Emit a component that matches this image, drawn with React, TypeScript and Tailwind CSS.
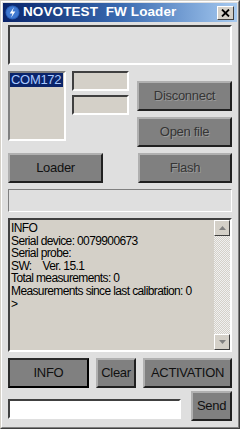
import React from "react";

const font = { fontFamily: '"Liberation Sans", Arial, sans-serif' };

function Btn({ label, className = "", dim = false, def = false }: { label: string; className?: string; dim?: boolean; def?: boolean }) {
  return (
    <div
      className={
        "flex items-center justify-center bg-[#808080] text-[13px] tracking-[-0.3px] " +
        (def
          ? "border-2 border-t-[#2a2a2a] border-l-[#2a2a2a] border-b-black border-r-black "
          : "border-2 border-t-[#b0b0b0] border-l-[#b0b0b0] border-b-[#202020] border-r-[#202020] ") +
        (dim ? "text-[#353535] " : "text-[#101010] ") +
        className
      }
    >
      <span style={dim ? { textShadow: "1px 1px 0 #9a9a9a" } : undefined}>{label}</span>
    </div>
  );
}

function Sunken({ className = "", children }: { className?: string; children?: React.ReactNode }) {
  return (
    <div className={"border-2 border-t-[#404040] border-l-[#404040] border-b-white border-r-white " + className}>
      {children}
    </div>
  );
}

export default function App() {
  return (
    <div style={font} className="w-[240px] h-[429px] bg-[#5a4a30] overflow-hidden">
      <div className="w-[240px] h-[429px] border border-t-[#d4d0c8] border-l-[#d4d0c8] border-b-[#404040] border-r-[#404040] bg-[#d4d0c8]">
        <div className="h-full border border-t-white border-l-white border-b-[#808080] border-r-[#808080] p-[1px] flex flex-col bg-[#dfdfdf]">
          {/* title bar */}
          <div className="h-[19px] shrink-0 flex items-center bg-gradient-to-r from-[#0a246a] via-[#3a6ab0] to-[#a6caf0] pl-[2px] pr-[3px]">
            <svg width="15" height="15" viewBox="0 0 16 16" className="shrink-0">
              <circle cx="8" cy="8" r="7.5" fill="#2a5fb8" />
              <circle cx="8" cy="8" r="6.5" fill="#3f78d0" />
              <path d="M9.5 2.5 L5 9 L8 9 L6.5 13.5 L11 7 L8 7 Z" fill="white" />
            </svg>
            <span className="ml-[3px] text-white font-bold text-[13.5px] tracking-[0.1px] whitespace-pre">NOVOTEST  FW Loader</span>
            <div className="ml-auto w-[17px] h-[14px] bg-[#d4d0c8] border border-t-white border-l-white border-b-[#404040] border-r-[#404040] flex items-center justify-center">
              <svg width="9" height="8" viewBox="0 0 9 8">
                <path d="M1 0.5 L8 7.5 M8 0.5 L1 7.5" stroke="black" strokeWidth="1.8" />
              </svg>
            </div>
          </div>
          {/* body */}
          <div className="flex-1 flex flex-col px-[5px] pt-[3px] bg-[#dfdfdf]">
            <Sunken className="h-[40px] bg-[#dfdfdf] w-[224px]" />
            <div className="flex mt-[6px]">
              <Sunken className="w-[59px] h-[70px] bg-[#d4d0c8] border-t-[#808080] border-l-[#808080] border-r-white border-b-white">
                <div className="bg-[#0a246a] text-[#a8c8ff] text-[13px] leading-[14px] h-[14px] pl-[1px] mr-[1px] tracking-[-0.3px]">COM172</div>
              </Sunken>
              <div className="flex flex-col ml-[6px] gap-[4px]">
                <Sunken className="w-[57px] h-[20px] bg-[#d4d0c8]" />
                <Sunken className="w-[57px] h-[20px] bg-[#d4d0c8]" />
              </div>
              <div className="flex flex-col ml-[8px] mt-[10px] gap-[6px]">
                <Btn label="Disconnect" dim className="w-[95px] h-[30px]" />
                <Btn label="Open file" dim className="w-[95px] h-[30px]" />
              </div>
            </div>
            <div className="flex mt-[6px] justify-between w-[224px]">
              <Btn label="Loader" className="w-[95px] h-[30px]" />
              <Btn label="Flash" dim className="w-[94px] h-[30px]" />
            </div>
            <Sunken className="mt-[6px] h-[23px] w-[224px] bg-[#dfdfdf] border-t-[#808080] border-l-[#808080] border-[1px]" />
            <Sunken className="mt-[6px] h-[134px] w-[224px] bg-[#d4d0c8] flex">
              <div className="flex-1 pl-[1px] pt-[2px] text-[12px] leading-[12.6px] text-black tracking-[-0.62px] whitespace-nowrap overflow-hidden">
                <div>INFO</div>
                <div>Serial device: 0079900673</div>
                <div>Serial probe:</div>
                <div className="whitespace-pre">SW:    Ver. 15.1</div>
                <div>Total measurements: 0</div>
                <div>Measurements since last calibration: 0</div>
                <div>&gt;</div>
              </div>
              <div
                className="w-[16px] shrink-0 flex flex-col"
                style={{
                  backgroundColor: "#f0f0f0",
                  backgroundImage:
                    "linear-gradient(45deg,#d4d0c8 25%,transparent 25%,transparent 75%,#d4d0c8 75%),linear-gradient(45deg,#d4d0c8 25%,transparent 25%,transparent 75%,#d4d0c8 75%)",
                  backgroundSize: "2px 2px",
                  backgroundPosition: "0 0,1px 1px",
                }}
              >
                <div className="h-[16px] bg-[#d4d0c8] border border-t-white border-l-white border-b-[#404040] border-r-[#404040] flex items-center justify-center">
                  <svg width="7" height="4" viewBox="0 0 7 4"><path d="M3.5 0 L7 4 L0 4 Z" fill="#808080" /></svg>
                </div>
                <div className="flex-1" />
                <div className="h-[16px] bg-[#d4d0c8] border border-t-white border-l-white border-b-[#404040] border-r-[#404040] flex items-center justify-center">
                  <svg width="7" height="4" viewBox="0 0 7 4"><path d="M0 0 L7 0 L3.5 4 Z" fill="#808080" /></svg>
                </div>
              </div>
            </Sunken>
            <div className="flex mt-[6px] w-[224px] gap-[7px]">
              <Btn label="INFO" def className="w-[81px] h-[30px]" />
              <Btn label="Clear" className="w-[40px] h-[30px]" />
              <Btn label="ACTIVATION" className="w-[89px] h-[30px]" />
            </div>
            <div className="flex mt-[3px] w-[224px] items-end">
              <Sunken className="w-[173px] h-[20px] bg-white mb-[2px]" />
              <Btn label="Send" className="ml-auto w-[41px] h-[30px]" />
            </div>
          </div>
        </div>
      </div>
    </div>
  );
}
